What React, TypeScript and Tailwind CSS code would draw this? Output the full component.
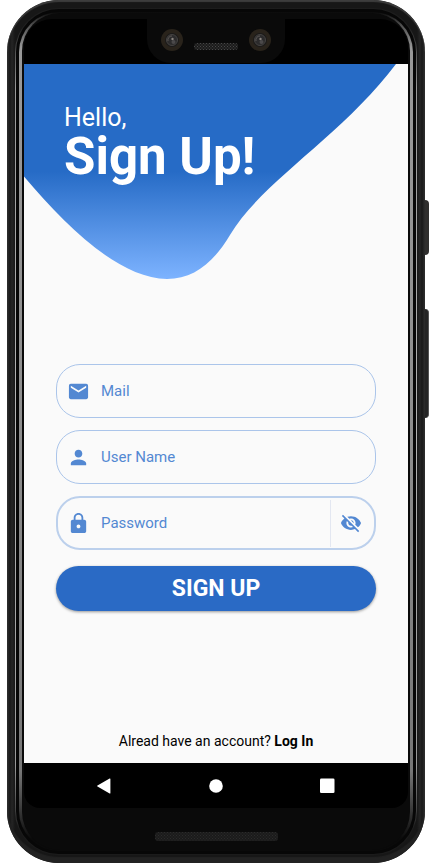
import type { ReactNode } from "react";
import { MdLock, MdMail, MdPerson, MdVisibilityOff } from "react-icons/md";

type FieldProps = {
  id: string;
  label: string;
  type: string;
  icon: ReactNode;
  thick?: boolean;
  children?: ReactNode;
};

function Field({ id, label, type, icon, thick, children }: FieldProps) {
  return (
    <div
      className={`flex h-[54px] items-center overflow-hidden rounded-3xl text-[#5388d2] ${
        thick ? "border-2 border-[#bcd0ec] px-[9px]" : "border border-[#abc5ea] px-[10px]"
      }`}
    >
      <label htmlFor={id} aria-label={label} className="shrink-0">
        {icon}
      </label>
      <input
        id={id}
        type={type}
        placeholder={label}
        aria-label={label}
        className="ml-[11px] h-full min-w-0 flex-1 bg-transparent text-[15px] outline-none placeholder:text-[#5388d2] placeholder:opacity-100"
      />
      {children}
    </div>
  );
}

function Camera() {
  return (
    <svg viewBox="0 0 22 22" className="size-[22px]" aria-hidden="true">
      <circle cx="11" cy="11" r="11" fill="#29231b" />
      <circle cx="11" cy="11" r="7" fill="#1b1a1a" />
      <circle cx="11" cy="11" r="5.5" fill="#2c2b2c" stroke="#454341" strokeWidth="1" />
      <path d="M7 12a4 4 0 0 1 4-5" stroke="#5c5855" fill="none" />
      <circle cx="11.5" cy="10" r="1.2" fill="#8b8580" />
      <circle cx="12.5" cy="13" r="2" fill="#4b494a" />
    </svg>
  );
}

function Grille({ id, className, color }: { id: string; className: string; color: string }) {
  return (
    <svg className={className} aria-hidden="true">
      <defs>
        <pattern id={id} width="3" height="3" patternUnits="userSpaceOnUse">
          <path d="M0 0h1v1h-1zM1.5 1.5h1v1h-1z" fill={color} />
        </pattern>
      </defs>
      <rect width="100%" height="100%" rx="3" fill="#1b1b1b" />
      <rect width="100%" height="100%" rx="3" fill={`url(#${id})`} />
    </svg>
  );
}

function StatusArea() {
  return (
    <div className="flex h-[45px] justify-center rounded-t-[28px] bg-black">
      <div className="-mt-1 flex h-12 w-[138px] items-center justify-between rounded-b-[24px] bg-[#0a0a0a] px-[14px] pt-px">
        <Camera />
        <Grille id="earpiece" className="mt-[14px] h-[7px] w-11" color="#474747" />
        <Camera />
      </div>
    </div>
  );
}

function Hero() {
  return (
    <header className="relative h-[215px]">
      <svg
        viewBox="0 0 384 215"
        preserveAspectRatio="none"
        className="absolute inset-0 size-full"
        aria-hidden="true"
      >
        <defs>
          <linearGradient id="wave" x1="0" y1="0" x2="0" y2="1">
            <stop offset="0.5" stopColor="#266bc6" />
            <stop offset="1" stopColor="#7db3ff" />
          </linearGradient>
        </defs>
        <path
          d="M0 0V112.5C42 162 94 214 143 215C170 215 190 198 206 171C237 118 318 72 372 0Z"
          fill="url(#wave)"
        />
      </svg>
      <h1 className="relative px-10 pt-[39px] text-white">
        <span className="block text-[25px] leading-[30px]">Hello,</span>
        <span className="block text-[51px] leading-[48px] font-bold">Sign Up!</span>
      </h1>
    </header>
  );
}

function SignUpForm() {
  return (
    <form className="mt-[85px] flex flex-col gap-3 px-8" onSubmit={(e) => e.preventDefault()}>
      <Field id="mail" label="Mail" type="email" icon={<MdMail size={23} />} />
      <Field id="user" label="User Name" type="text" icon={<MdPerson size={23} />} />
      <Field id="password" label="Password" type="password" icon={<MdLock size={23} />} thick>
        <button
          type="button"
          aria-label="Show password"
          className="-mr-[9px] flex h-[47px] w-11 items-center border-l border-[#e3e7f1] pl-[9px]"
        >
          <MdVisibilityOff size={22} />
        </button>
      </Field>
      <button
        type="submit"
        className="mt-1 h-[45px] rounded-full bg-[#2a6ac5] pt-[2px] text-[23px] font-bold text-white shadow-[0_1px_3px_rgba(0,0,0,0.4)]"
      >
        SIGN UP
      </button>
    </form>
  );
}

function NavBar() {
  return (
    <nav className="flex h-[45px] items-center justify-between rounded-b-[16px] bg-black px-[72px] text-white">
      <button type="button" aria-label="Back">
        <svg viewBox="0 0 16 16" className="size-4" fill="currentColor">
          <path d="M1.5 7.4 13.6.6q.8-.4.8.5v13.8q0 .9-.8.5L1.5 8.6q-1-.6 0-1.2Z" />
        </svg>
      </button>
      <button type="button" aria-label="Home">
        <svg viewBox="0 0 14 14" className="size-[14px]" fill="currentColor">
          <circle cx="7" cy="7" r="6.8" />
        </svg>
      </button>
      <button type="button" aria-label="Recent apps">
        <svg viewBox="0 0 16 16" className="size-4" fill="currentColor">
          <rect x="0" y="0.5" width="14.5" height="14.5" rx="1.3" />
        </svg>
      </button>
    </nav>
  );
}

export default function App() {
  return (
    <div className="flex min-h-screen flex-col bg-white pr-2 pb-px pl-[7px] font-[Roboto,sans-serif]">
      <div className="relative flex flex-1 flex-col rounded-[52px] bg-[linear-gradient(to_right,#303030_0,#191919_3px,#252525_5px,#171717_8px,#171717_calc(100%-8px),#252525_calc(100%-5px),#191919_calc(100%-3px),#303030_100%)] p-2 shadow-[inset_0_2px_1px_#3d3d3d,inset_0_-6px_1px_#222]">
        <span className="absolute top-[200px] -right-[4px] h-[55px] w-[4px] rounded-r-sm bg-[#302f2e]" />
        <span className="absolute top-[309px] -right-[4px] h-[109px] w-[4px] rounded-r-sm border-r border-[#555] bg-[#252525]" />
        <div className="flex flex-1 flex-col rounded-[44px] bg-[linear-gradient(to_bottom,#1c1c1c_0,#222_20px,#999_80px,#b5b5b5_50%,#999_calc(100%-90px),#1b1b1b_calc(100%-25px))] p-px">
          <div className="flex flex-1 flex-col rounded-[43px] bg-[#070707] p-[3px]">
            <div className="flex flex-1 flex-col rounded-[40px] bg-[linear-gradient(to_bottom,#0a0a0a_0,#4c4c4c_12px,#999_36px,#8e8e8e_50%,#777_calc(100%-80px),#0a0a0a_calc(100%-12px))] px-[3px] py-px">
              <div className="flex flex-1 flex-col rounded-[38px] bg-[#0a0a0a] px-[2px] pt-[6px]">
                <StatusArea />
                <main className="flex flex-1 flex-col bg-[#fafafa]">
                  <Hero />
                  <SignUpForm />
                  <p className="mt-auto pb-3 text-center text-sm text-black">
                    Alread have an account?{" "}
                    <a href="#login" className="font-bold">
                      Log In
                    </a>
                  </p>
                </main>
                <NavBar />
                <div className="flex h-[42px] justify-center pt-6">
                  <Grille id="speaker" className="h-[9px] w-[123px]" color="#2b2b2b" />
                </div>
              </div>
            </div>
          </div>
        </div>
      </div>
    </div>
  );
}
